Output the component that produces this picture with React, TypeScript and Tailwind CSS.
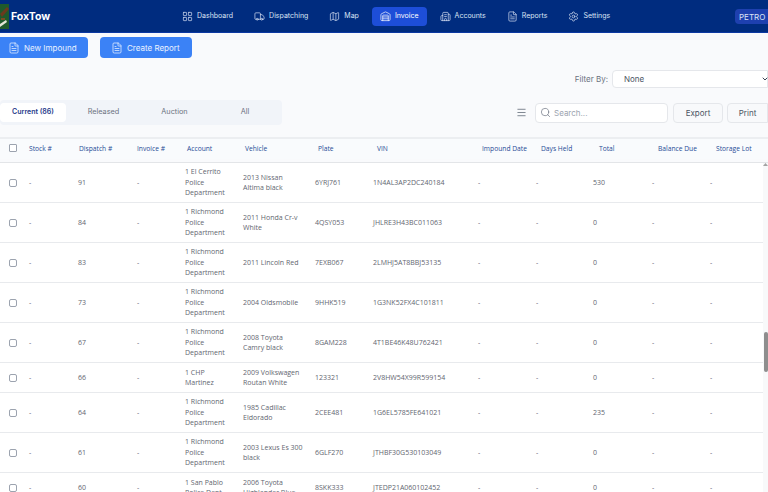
import { Building2, FileText, LayoutGrid, Map, Menu, Search, Settings, Truck, Warehouse, ChevronDown } from 'lucide-react'

const navItems = [
  { label: 'Dashboard', icon: LayoutGrid },
  { label: 'Dispatching', icon: Truck },
  { label: 'Map', icon: Map },
  { label: 'Invoice', icon: Warehouse, active: true },
  { label: 'Accounts', icon: Building2 },
  { label: 'Reports', icon: FileText },
  { label: 'Settings', icon: Settings },
]

const rows = [
  { dispatch: '91', account: ['1 El Cerrito', 'Police', 'Department'], vehicle: ['2013 Nissan', 'Altima black'], plate: '6YRJ761', vin: '1N4AL3AP2DC240184', total: '530', h: 'h-10' },
  { dispatch: '84', account: ['1 Richmond', 'Police', 'Department'], vehicle: ['2011 Honda Cr-v', 'White'], plate: '4QSY053', vin: 'JHLRE3H43BC011063', total: '0', h: 'h-10' },
  { dispatch: '83', account: ['1 Richmond', 'Police', 'Department'], vehicle: ['2011 Lincoln Red'], plate: '7EXB067', vin: '2LMHJ5AT8BBJ53135', total: '0', h: 'h-10' },
  { dispatch: '73', account: ['1 Richmond', 'Police', 'Department'], vehicle: ['2004 Oldsmobile'], plate: '9HHK519', vin: '1G3NK52FX4C101811', total: '0', h: 'h-10' },
  { dispatch: '67', account: ['1 Richmond', 'Police', 'Department'], vehicle: ['2008 Toyota', 'Camry black'], plate: '8GAM228', vin: '4T1BE46K48U762421', total: '0', h: 'h-10' },
  { dispatch: '66', account: ['1 CHP', 'Martinez'], vehicle: ['2009 Volkswagen', 'Routan White'], plate: '123321', vin: '2V8HW54X99R599154', total: '0', h: 'h-[30px]' },
  { dispatch: '64', account: ['1 Richmond', 'Police', 'Department'], vehicle: ['1985 Cadillac', 'Eldorado'], plate: '2CEE481', vin: '1G6EL5785FE641021', total: '235', h: 'h-10' },
  { dispatch: '61', account: ['1 Richmond', 'Police', 'Department'], vehicle: ['2003 Lexus Es 300', 'black'], plate: '6GLF270', vin: 'JTHBF30G530103049', total: '0', h: 'h-10' },
  { dispatch: '60', account: ['1 San Pablo', 'Police Dept'], vehicle: ['2006 Toyota', 'Highlander Blue'], plate: '8SKK333', vin: 'JTEDP21A060102452', total: '0', h: 'h-[30px]' },
]

const Logo = () => (
  <svg width="9" height="25" viewBox="0 0 9 25" className="shrink-0">
    <rect width="9" height="25" fill="#1f5a2c" />
    <path d="M0 10 L7 3 L9 5 L2 13 Z" fill="#6b3a1e" />
    <path d="M0 20 L6 16 L7 18 L0 23 Z" fill="#e5e7d8" />
    <rect x="1" y="14" width="4" height="2" fill="#7a4a22" />
  </svg>
)

export default function App() {
  return (
    <div className="h-screen overflow-hidden bg-[#f9fafc] font-['Inter',sans-serif]">
      {/* Top nav */}
      <header className="h-[33px] pt-px bg-[#002c7f] border-b border-[#1d4ed8]/40 flex items-center">
        <Logo />
        <span className="ml-[2px] text-white text-[10.5px] font-bold w-[163px]">FoxTow</span>
        <nav className="flex items-center gap-[5px]">
          {navItems.map((item) => (
            <div
              key={item.label}
              className={`h-[19px] px-2 flex items-center gap-[4px] rounded text-[7px] ${item.active ? 'bg-[#1d4ed8] text-white' : 'text-[#dbe4f5]'}`}
            >
              <item.icon size={11} strokeWidth={1.5} />
              {item.label}
            </div>
          ))}
        </nav>
        <div className="ml-auto w-[33px] h-[15px] pl-[4px] bg-[#1e40af] rounded-l text-[#dbe4f5] text-[8px] flex items-center">
          PETRO
        </div>
      </header>

      {/* Action buttons */}
      <div className="flex gap-3 -ml-[3px] mt-1">
        <button className="w-[91px] h-[21px] pl-[11px] flex items-center gap-[4px] bg-[#3b82f6] rounded text-[#eaf2ff] text-[8px]">
          <FileText size={12} strokeWidth={1.5} />
          New Impound
        </button>
        <button className="w-[92px] h-[21px] pl-[11px] flex items-center gap-[4px] bg-[#3b82f6] rounded text-[#eaf2ff] text-[8px]">
          <FileText size={12} strokeWidth={1.5} />
          Create Report
        </button>
      </div>

      {/* Filter */}
      <div className="flex justify-end items-center gap-[4px] mt-3 h-[18px]">
        <span className="text-[#6b7280] text-[8px]">Filter By:</span>
        <div className="w-[156px] h-[18px] pl-[11px] bg-white border border-[#e5e7eb] rounded-l flex items-center justify-between text-[#4b5563] text-[8px]">
          None
          <ChevronDown size={8} strokeWidth={3} className="text-[#374151] -mr-[2px]" />
        </div>
      </div>

      {/* Tabs and tools */}
      <div className="flex items-center mt-[12px] h-[25px]">
        <div className="w-[282px] h-[25px] bg-[#f1f4f9] rounded flex items-center text-[7.3px] text-[#6b7280]">
          <div className="w-[66px] h-[19px] bg-white rounded flex items-center justify-center text-[7px] font-semibold text-[#1e3a8a]">Current (86)</div>
          <div className="w-[75px] text-center">Released</div>
          <div className="w-[67px] text-center">Auction</div>
          <div className="w-[74px] text-center">All</div>
        </div>
        <Menu size={11} strokeWidth={1.5} className="ml-[234px] text-[#4b5563]" />
        <div className="ml-[8px] w-[133px] h-[20px] bg-white border border-[#e5e7eb] rounded flex items-center pl-[4px] gap-[3px] text-[#9ca3af] text-[8px]">
          <Search size={11} strokeWidth={1.5} className="text-[#6b7280]" />
          Search...
        </div>
        <div className="ml-[5px] w-[50px] h-[20px] bg-[#f8f9fb] border border-[#e5e7eb] rounded flex items-center justify-center text-[#4b5563] text-[8px]">Export</div>
        <div className="ml-[4px] w-[41px] h-[20px] bg-[#f8f9fb] border border-[#e5e7eb] rounded-l flex items-center justify-center text-[#4b5563] text-[8px]">Print</div>
      </div>

      {/* Table header */}
      <div className="mt-[12px] h-[22px] border-t-2 border-[#eceef1] bg-[#f9fbfd] flex items-center text-[6.7px] font-medium text-[#1f4b96] font-['Open_Sans',sans-serif]">
        <div className="w-[29px] pl-[9px] pb-[2px]">
          <div className="w-2 h-2 border border-[#9ca3af] rounded-[1px] bg-white" />
        </div>
        <div className="w-[50px]">Stock #</div>
        <div className="w-[58px]">Dispatch #</div>
        <div className="w-[50px]">Invoice #</div>
        <div className="w-[58px]">Account</div>
        <div className="w-[73px]">Vehicle</div>
        <div className="w-[59px]">Plate</div>
        <div className="w-[105px]">VIN</div>
        <div className="w-[59px]">Impound Date</div>
        <div className="w-[58px]">Days Held</div>
        <div className="w-[59px]">Total</div>
        <div className="w-[58px]">Balance Due</div>
        <div>Storage Lot</div>
      </div>

      {/* Table body */}
      <div className="mt-[3px] flex border-t border-[#e3e5e8] bg-white">
        <div className="w-[763px] text-[7px] leading-[10.4px] text-[#5f6670] font-['Open_Sans',sans-serif]">
          {rows.map((row) => (
            <div key={row.dispatch} className={`${row.h} pt-px border-b border-[#e8eaed] flex items-center`}>
              <div className="w-[29px] pl-[9px]">
                <div className="w-2 h-2 border border-[#9ca3af] rounded-[2px] bg-white" />
              </div>
              <div className="w-[49px]">-</div>
              <div className="w-[59px]">{row.dispatch}</div>
              <div className="w-[48px]">-</div>
              <div className="w-[58px]">
                {row.account.map((line) => (
                  <div key={line}>{line}</div>
                ))}
              </div>
              <div className="w-[72px]">
                {row.vehicle.map((line) => (
                  <div key={line}>{line}</div>
                ))}
              </div>
              <div className="w-[58px]">{row.plate}</div>
              <div className="w-[105px]">{row.vin}</div>
              <div className="w-[58px]">-</div>
              <div className="w-[57px]">-</div>
              <div className="w-[59px]">{row.total}</div>
              <div className="w-[58px]">-</div>
              <div>-</div>
            </div>
          ))}
        </div>
        <div className="w-[5px] bg-[#f8f9fa] flex flex-col items-end">
          <svg width="5" height="3" viewBox="0 0 5 3" className="mb-[166px]">
            <path d="M2.5 0 L5 3 L0 3 Z" fill="#a3a3a3" />
          </svg>
          <div className="w-1 h-10 bg-[#8e8e8e] rounded-sm" />
        </div>
      </div>
    </div>
  )
}
